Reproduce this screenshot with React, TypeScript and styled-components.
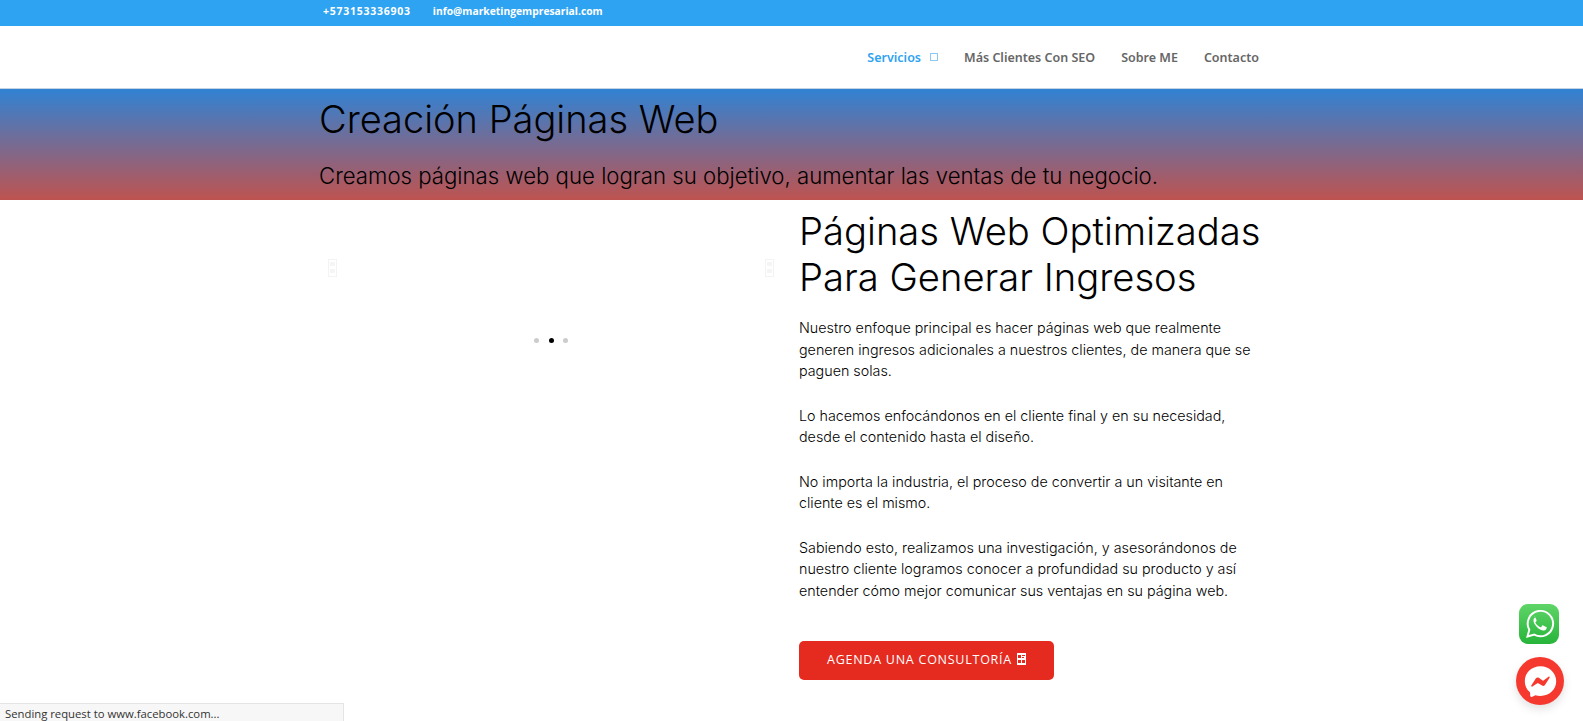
import styled, { createGlobalStyle } from 'styled-components';

const GlobalStyle = createGlobalStyle`
  html, body {
    margin: 0;
    padding: 0;
    background: #fff;
    overflow: hidden;
  }
  * { box-sizing: border-box; }
`;

const Page = styled.div`
  width: 1583px;
  height: 721px;
  position: relative;
  overflow: hidden;
  font-family: "Inter", "Liberation Sans", sans-serif;
  color: #000;
`;

const Container = styled.div`
  width: 943px;
  margin-left: 320px;
`;

const TopBar = styled.div`
  background: #2ea3f2;
  height: 26px;
`;

const TopBarRow = styled(Container)`
  display: flex;
  gap: 22px;
  padding: 3px 0 0 3px;
  color: #fff;
  font-family: "Open Sans", sans-serif;
  font-weight: 700;
  line-height: 16px;
`;

const Phone = styled.span`
  font-size: 10.5px;
  letter-spacing: 0.75px;
`;

const Email = styled.span`
  font-size: 10.3px;
`;

const Header = styled.header`
  height: 63px;
  background: #fff;
  border-bottom: 1px solid #c4d3e4;
`;

const Nav = styled(Container)`
  display: flex;
  justify-content: flex-end;
  align-items: center;
  height: 62px;
  padding-right: 4px;
  font-family: "Noto Sans", sans-serif;
  font-size: 12.5px;
  font-weight: 600;
`;

const NavItem = styled.a<{ $active?: boolean }>`
  color: ${(p) => (p.$active ? '#2ea3f2' : '#666')};
  margin-left: 26px;
  display: flex;
  align-items: center;
`;

const Caret = styled.span`
  width: 8px;
  height: 8px;
  margin-left: 9px;
  border: 1px solid #8cc8f2;
`;

const Hero = styled.section`
  height: 111px;
  background: linear-gradient(180deg, #3182d3 0%, #be5350 100%);
`;

const HeroTitle = styled.h1`
  margin: 0 0 0 -1px;
  padding-top: 5px;
  font-size: 38px;
  line-height: 50px;
  font-weight: 300;
`;

const HeroSub = styled.p`
  margin: 17px 0 0 -1px;
  font-size: 22.2px;
  line-height: 30px;
  font-weight: 300;
`;

const Content = styled(Container)`
  display: grid;
  grid-template-columns: 455px 1fr;
  column-gap: 24px;
`;

const Slider = styled.div`
  position: relative;
  height: 300px;
`;

const Arrow = styled.svg<{ $side: 'left' | 'right' }>`
  position: absolute;
  top: 59px;
  ${(p) => (p.$side === 'left' ? 'left: 8px;' : 'right: 1px;')}
  width: 9px;
  height: 18px;
`;

const Dots = styled.div`
  position: absolute;
  top: 138px;
  left: 214px;
  display: flex;
  gap: 9.5px;
`;

const Dot = styled.span<{ $on?: boolean }>`
  width: 5px;
  height: 5px;
  border-radius: 50%;
  background: ${(p) => (p.$on ? '#000' : '#ccc')};
`;

const Copy = styled.div`
  padding-top: 8px;
`;

const Heading = styled.h2`
  margin: 0 0 17px;
  font-size: 38.2px;
  line-height: 46px;
  font-weight: 300;
`;

const Para = styled.p`
  margin: 0 0 22.6px;
  font-size: 14.3px;
  line-height: 21.7px;
  font-weight: 300;
  color: #000;
`;

const Cta = styled.a`
  display: flex;
  align-items: center;
  justify-content: center;
  gap: 5px;
  width: 255px;
  height: 39px;
  margin-top: 39px;
  padding-bottom: 2px;
  background: #e52b1f;
  border-radius: 5px;
  color: #fff;
  font-family: "Open Sans", sans-serif;
  font-size: 12.5px;
  letter-spacing: 0.75px;
`;

const StatusBar = styled.div`
  position: absolute;
  left: 0;
  bottom: 0;
  width: 344px;
  height: 18px;
  background: #f7f7f7;
  border: 1px solid #e4e4e4;
  border-width: 1px 1px 0 0;
  padding-left: 5px;
  font-family: "Open Sans", sans-serif;
  font-size: 11.3px;
  line-height: 20px;
  color: #333;
`;

const WhatsApp = styled.div`
  position: absolute;
  left: 1519px;
  top: 604px;
  width: 40px;
  height: 40px;
  border-radius: 9px;
  background: linear-gradient(180deg, #5fd568 0%, #27b43a 100%);
  display: flex;
  align-items: center;
  justify-content: center;
`;

const Messenger = styled.div`
  position: absolute;
  left: 1516px;
  top: 657px;
  width: 48px;
  height: 48px;
  border-radius: 50%;
  background: #f5392f;
  box-shadow: 0 4px 10px rgba(0, 0, 0, 0.12);
  display: flex;
  align-items: center;
  justify-content: center;
`;

const ArrowGlyph = ({ side }: { side: 'left' | 'right' }) => (
  <Arrow $side={side} viewBox="0 0 9 18">
    <rect x="0.5" y="0.5" width="8" height="17" fill="none" stroke="#f3f3f3" />
    <rect x="2" y="3" width="5" height="4" fill="#f5f5f5" />
    <rect x="2" y="10" width="5" height="4" fill="#f5f5f5" />
  </Arrow>
);

const App = () => (
  <Page>
    <GlobalStyle />
    <TopBar>
      <TopBarRow>
        <Phone>+573153336903</Phone>
        <Email>info@marketingempresarial.com</Email>
      </TopBarRow>
    </TopBar>
    <Header>
      <Nav>
        <NavItem $active>
          Servicios
          <Caret />
        </NavItem>
        <NavItem>Más Clientes Con SEO</NavItem>
        <NavItem>Sobre ME</NavItem>
        <NavItem>Contacto</NavItem>
      </Nav>
    </Header>
    <Hero>
      <Container>
        <HeroTitle>Creación Páginas Web</HeroTitle>
        <HeroSub>Creamos páginas web que logran su objetivo, aumentar las ventas de tu negocio.</HeroSub>
      </Container>
    </Hero>
    <Content>
      <Slider>
        <ArrowGlyph side="left" />
        <ArrowGlyph side="right" />
        <Dots>
          <Dot />
          <Dot $on />
          <Dot />
        </Dots>
      </Slider>
      <Copy>
        <Heading>
          Páginas Web Optimizadas
          <br />
          Para Generar Ingresos
        </Heading>
        <Para>
          Nuestro enfoque principal es hacer páginas web que realmente
          <br />
          generen ingresos adicionales a nuestros clientes, de manera que se
          <br />
          paguen solas.
        </Para>
        <Para>
          Lo hacemos enfocándonos en el cliente final y en su necesidad,
          <br />
          desde el contenido hasta el diseño.
        </Para>
        <Para>
          No importa la industria, el proceso de convertir a un visitante en
          <br />
          cliente es el mismo.
        </Para>
        <Para>
          Sabiendo esto, realizamos una investigación, y asesorándonos de
          <br />
          nuestro cliente logramos conocer a profundidad su producto y así
          <br />
          entender cómo mejor comunicar sus ventajas en su página web.
        </Para>
        <Cta>
          AGENDA UNA CONSULTORÍA
          <svg width="9" height="12" viewBox="0 0 9 12">
            <rect width="9" height="12" fill="#fff" />
            <rect x="1" y="2" width="3" height="3" fill="#e52b1f" />
            <rect x="5" y="2" width="3" height="1" fill="#e52b1f" />
            <rect x="5" y="4" width="2" height="1" fill="#e52b1f" />
            <rect x="1" y="7" width="3" height="3" fill="#e52b1f" />
            <rect x="5" y="7" width="3" height="3" fill="#e52b1f" />
          </svg>
        </Cta>
      </Copy>
    </Content>
    <StatusBar>Sending request to www.facebook.com...</StatusBar>
    <WhatsApp>
      <svg width="35" height="35" viewBox="0 0 32 32">
        <path d="M5 27l1.700-6.200A11.600 11.600 0 1 1 11.200 25.300z" fill="none" stroke="#fff" strokeWidth="1.800" />
        <path d="M12.300 9.500c-.5 0-1.600.6-1.800 2.200-.3 2.300 1.300 4.700 3.100 6.500 2 2 4.400 3.400 6.400 3.200 1.600-.2 2.500-1.400 2.600-2.300.1-.5-.1-.7-.5-.9l-2.800-1.300c-.4-.2-.7-.1-.9.200l-1 1.300c-.2.200-.5.300-.8.100-1.800-.8-3.300-2.200-4.300-4-.2-.3-.1-.5.100-.7l.8-1c.2-.3.2-.5.100-.8l-1.100-2.700c-.2-.5-.5-.6-.9-.6z" fill="#fff" />
      </svg>
    </WhatsApp>
    <Messenger>
      <svg width="39" height="39" viewBox="0 0 36 36">
        <path d="M18 4C9.700 4 3.500 10 3.500 17.800c0 4.100 1.700 7.600 4.500 10 .5.400.4.800.5 3.400 0 .8.800 1.300 1.500 1l3.300-1.500c1.400.4 3 .6 4.700.6 8.300 0 14.500-6 14.500-13.500S26.300 4 18 4z" fill="#fff" />
        <path d="M9.500 21.800l4.300-6.700c.6-.9 1.900-1.100 2.700-.5l3.400 2.500c.3.200.6.200.9 0l4.600-3.500c.6-.5 1.400.3 1 .9l-4.300 6.700c-.6.900-1.900 1.100-2.700.5L16 19.700c-.3-.2-.6-.2-.9 0l-4.600 3c-.6.500-1.400-.3-1-.9z" fill="#f5392f" />
      </svg>
    </Messenger>
  </Page>
);

export default App;
